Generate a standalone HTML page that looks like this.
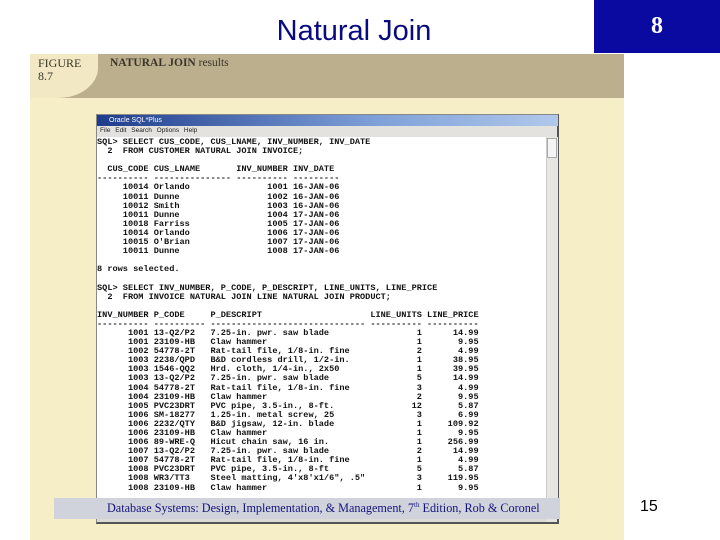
<!DOCTYPE html>
<html><head><meta charset="utf-8"><style>
*{margin:0;padding:0;box-sizing:border-box}
body{width:720px;height:540px;background:#fff;position:relative;overflow:hidden;font-family:"Liberation Sans",sans-serif}
.abs{position:absolute}
pre{font-family:"Liberation Mono",monospace;font-weight:bold;font-size:8.6px;line-height:9.1px;color:#111;white-space:pre}
</style></head><body>
<div class="abs" style="left:0;top:15px;width:708px;text-align:center;font-size:29px;color:#0a0a80;">Natural Join</div>
<div class="abs" style="left:594px;top:0;width:126px;height:53px;background:#0a0aa0;color:#fff;font-family:'Liberation Serif',serif;font-weight:bold;font-size:24px;text-align:center;line-height:52px;">8</div>
<div class="abs" style="left:30px;top:54px;width:594px;height:486px;background:#f6eec6"></div>
<div class="abs" style="left:30px;top:54px;width:594px;height:44px;background:#bcaf8e"></div>
<div class="abs" style="left:30px;top:54px;width:68px;height:44px;background:#f2e9c4;border-bottom-right-radius:40px 30px"></div>
<div class="abs" style="left:38px;top:57px;font-family:'Liberation Serif',serif;font-size:12px;color:#3a342a;line-height:13px">FIGURE<br>8.7</div>
<div class="abs" style="left:110px;top:57px;font-family:'Liberation Serif',serif;font-weight:bold;font-size:11.5px;color:#3a342a">NATURAL JOIN <span style="font-weight:normal">results</span></div>
<div class="abs" style="left:96px;top:114px;width:463px;height:410px;background:#e4e2de;border:1px solid #888;border-right:2px solid #555;border-bottom:2px solid #555"></div>
<div class="abs" style="left:97px;top:115px;width:461px;height:11px;background:linear-gradient(90deg,#1e3c8c,#7ea0d8 60%,#b0c8ea);color:#fff;font-size:7px;line-height:11px;padding-left:12px">Oracle SQL*Plus</div>
<div class="abs" style="left:100px;top:127px;font-size:6.5px;color:#222;word-spacing:3px">File Edit Search Options Help</div>
<div class="abs" style="left:97px;top:137px;width:449px;height:374px;background:#fff"></div>
<div class="abs" style="left:546px;top:137px;width:12px;height:374px;background:#e8e6e2;border-left:1px solid #ccc"></div>
<div class="abs" style="left:547px;top:138px;width:10px;height:20px;background:#f4f4f4;border:1px solid #aaa"></div>
<div class="abs" style="left:97px;top:511px;width:449px;height:11px;background:#dcdad6"></div>
<pre class="abs" style="left:97px;top:138px">SQL> SELECT CUS_CODE, CUS_LNAME, INV_NUMBER, INV_DATE
  2  FROM CUSTOMER NATURAL JOIN INVOICE;

  CUS_CODE CUS_LNAME       INV_NUMBER INV_DATE
---------- --------------- ---------- ---------
     10014 Orlando               1001 16-JAN-06
     10011 Dunne                 1002 16-JAN-06
     10012 Smith                 1003 16-JAN-06
     10011 Dunne                 1004 17-JAN-06
     10018 Farriss               1005 17-JAN-06
     10014 Orlando               1006 17-JAN-06
     10015 O'Brian               1007 17-JAN-06
     10011 Dunne                 1008 17-JAN-06

8 rows selected.

SQL> SELECT INV_NUMBER, P_CODE, P_DESCRIPT, LINE_UNITS, LINE_PRICE
  2  FROM INVOICE NATURAL JOIN LINE NATURAL JOIN PRODUCT;

INV_NUMBER P_CODE     P_DESCRIPT                     LINE_UNITS LINE_PRICE
---------- ---------- ------------------------------ ---------- ----------
      1001 13-Q2/P2   7.25-in. pwr. saw blade                 1      14.99
      1001 23109-HB   Claw hammer                             1       9.95
      1002 54778-2T   Rat-tail file, 1/8-in. fine             2       4.99
      1003 2238/QPD   B&amp;D cordless drill, 1/2-in.             1      38.95
      1003 1546-QQ2   Hrd. cloth, 1/4-in., 2x50               1      39.95
      1003 13-Q2/P2   7.25-in. pwr. saw blade                 5      14.99
      1004 54778-2T   Rat-tail file, 1/8-in. fine             3       4.99
      1004 23109-HB   Claw hammer                             2       9.95
      1005 PVC23DRT   PVC pipe, 3.5-in., 8-ft.               12       5.87
      1006 SM-18277   1.25-in. metal screw, 25                3       6.99
      1006 2232/QTY   B&amp;D jigsaw, 12-in. blade                1     109.92
      1006 23109-HB   Claw hammer                             1       9.95
      1006 89-WRE-Q   Hicut chain saw, 16 in.                 1     256.99
      1007 13-Q2/P2   7.25-in. pwr. saw blade                 2      14.99
      1007 54778-2T   Rat-tail file, 1/8-in. fine             1       4.99
      1008 PVC23DRT   PVC pipe, 3.5-in., 8-ft                 5       5.87
      1008 WR3/TT3    Steel matting, 4'x8'x1/6", .5"          3     119.95
      1008 23109-HB   Claw hammer                             1       9.95</pre>
<div class="abs" style="left:54px;top:498px;width:506px;height:21px;background:#d0d3dc"></div>
<div class="abs" style="left:107px;top:501px;font-family:'Liberation Serif',serif;font-size:12.2px;color:#14147a;white-space:nowrap">Database Systems: Design, Implementation, &amp; Management, 7<sup style="font-size:7px">th</sup> Edition, Rob &amp; Coronel</div>
<div class="abs" style="left:640px;top:498px;font-size:16px;color:#000">15</div>
</body></html>
